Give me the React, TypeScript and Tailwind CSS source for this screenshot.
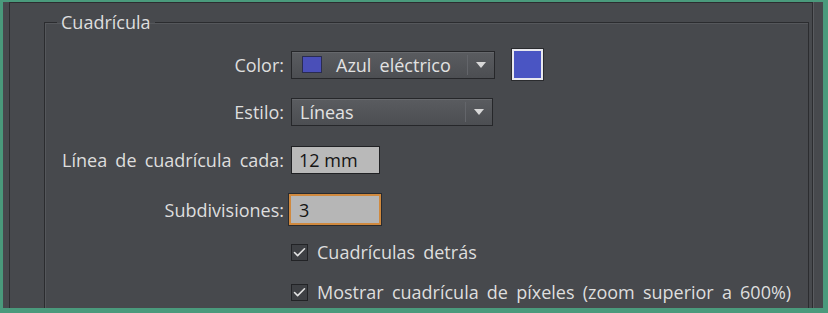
import { Check } from "lucide-react";

const font = { fontFamily: '"Open Sans", "Liberation Sans", sans-serif', wordSpacing: "3.5px" };

const Select = ({ children, width }: { children: React.ReactNode; width: string }) => (
  <div
    className={`${width} h-[28px] flex items-center border border-[#26272a] bg-gradient-to-b from-[#5a5c60] to-[#4c4e52] shadow-[inset_0_1px_0_#66686c]`}
  >
    <div className="flex-1 flex items-center gap-[14px] pl-[10px] text-[#e2e2e2]">{children}</div>
    <div className="w-px h-[20px] bg-[#393a3d] border-r border-[#63656a]" />
    <div className="w-[26px] flex justify-center">
      <span className="w-0 h-0 border-l-[5px] border-r-[5px] border-t-[6px] border-l-transparent border-r-transparent border-t-[#d8d8d8]" />
    </div>
  </div>
);

const Row = ({ label, children, className }: { label: string; children: React.ReactNode; className: string }) => (
  <div className={`flex items-center ${className}`}>
    <div className="w-[224px] text-right pr-[1px] text-[#dedede] whitespace-nowrap">{label}</div>
    <div className="ml-[6px] flex items-center">{children}</div>
  </div>
);

const CheckRow = ({ label, className }: { label: string; className: string }) => (
  <div className={`flex items-center pl-[230px] ${className}`}>
    <span className="w-[17px] h-[17px] border border-[#222326] bg-[#3e4044] flex items-center justify-center">
      <Check className="w-[15px] h-[15px] text-[#e4e4e4]" strokeWidth={2.5} />
    </span>
    <span className="ml-[9px] text-[#dedede] whitespace-nowrap">{label}</span>
  </div>
);

export default function App() {
  return (
    <div
      style={font}
      className="w-[828px] h-[313px] overflow-hidden border-l-[3px] border-t-2 border-r-[5px] border-b-[5px] border-[#4a9a7c] bg-[#47494d] text-[18px] leading-[24px]"
    >
      <div className="h-full ml-[6px] mr-[10px] border-l border-t border-r border-[#2c2d30] shadow-[1px_0_0_#5a5c60]">
        <fieldset className="ml-[34px] mr-[3px] mt-[9px] border border-[#2b2c2f] shadow-[inset_1px_1px_0_#55575b] pb-[20px]">
          <legend className="ml-[12px] px-[4px] text-[#dedede] leading-[20px]" style={{ wordSpacing: "0px" }}>
            Cuadrícula
          </legend>

          <div className="pl-[16px]">
            <Row label="Color:" className="mt-[17px]">
              <Select width="w-[204px]">
                <span className="w-[20px] h-[17px] bg-[#4a4fb8] border border-[#2a2c50]" />
                <span>Azul eléctrico</span>
              </Select>
              <span className="ml-[17px] w-[31px] h-[31px] bg-[#4a55c3] border-2 border-[#e8e8ee] outline outline-1 outline-[#2a2b2e]" />
            </Row>

            <Row label="Estilo:" className="mt-[18px]">
              <Select width="w-[202px]">
                <span className="-ml-[2px]">Líneas</span>
              </Select>
            </Row>

            <Row label="Línea de cuadrícula cada:" className="mt-[20px]">
              <div
                className="w-[89px] h-[28px] flex items-center pl-[7px] bg-[#b9b9b9] border border-[#202124] text-[#141414]"
                style={{ wordSpacing: "0px" }}
              >
                12 mm
              </div>
            </Row>

            <Row label="Subdivisiones:" className="mt-[20px]">
              <div className="-ml-[2px] w-[92px] h-[31px] flex items-center pl-[8px] bg-[#b6b6b6] border-2 border-[#d0893e] outline outline-1 outline-[#2a2b2e] text-[#141414]">
                3
              </div>
            </Row>

            <CheckRow label="Cuadrículas detrás" className="mt-[15px]" />
            <CheckRow label="Mostrar cuadrícula de píxeles (zoom superior a 600%)" className="mt-[16px]" />
          </div>
        </fieldset>
      </div>
    </div>
  );
}
